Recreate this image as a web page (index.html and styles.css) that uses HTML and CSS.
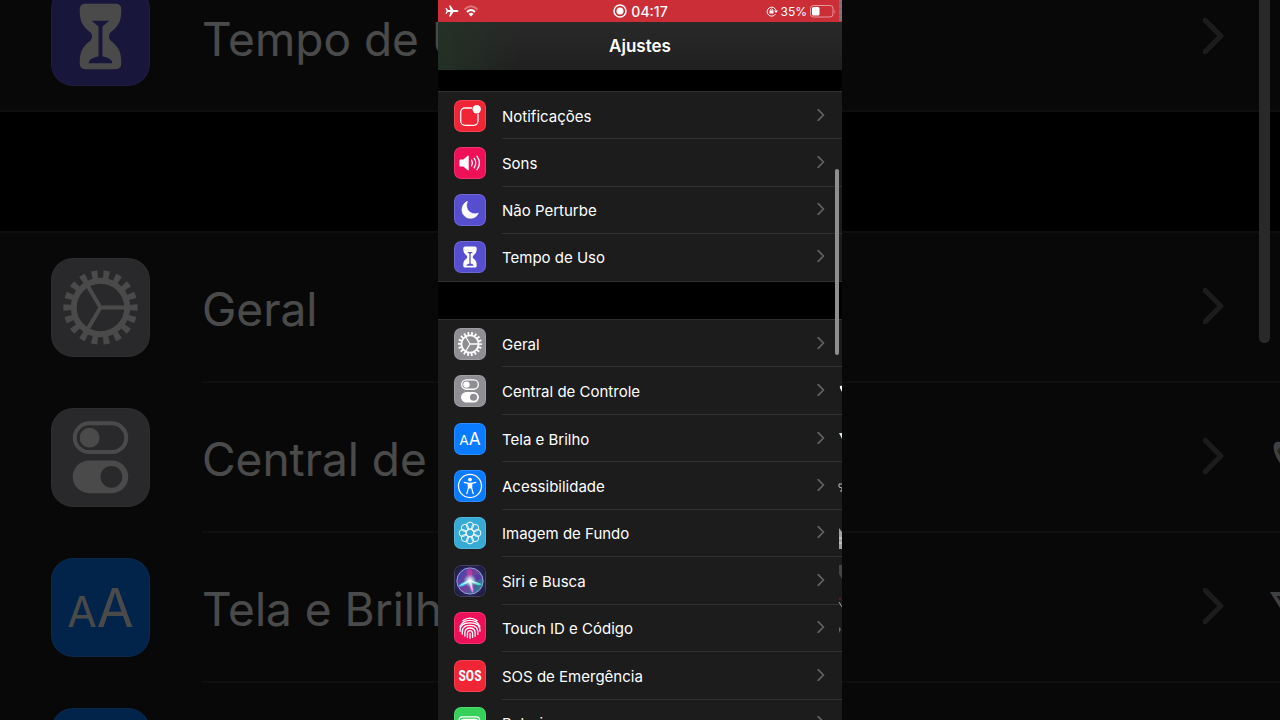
FILE: index.html
```html
<!DOCTYPE html>
<html lang="pt-BR">
<head>
    <meta charset="UTF-8">
    <meta name="viewport" content="width=device-width, initial-scale=1.0">
    <title>Ajustes</title>
    <link rel="stylesheet" href="styles.css">
</head>
<body>
    <!-- Icon set, 100x100 grid -->
    <svg class="sprite" aria-hidden="true">
        <defs>
            <radialGradient id="siri-bg" cx="50%" cy="50%" r="60%">
                <stop offset="0" stop-color="#5b4a9c"/>
                <stop offset="0.6" stop-color="#2b2768"/>
                <stop offset="1" stop-color="#1b1b35"/>
            </radialGradient>
            <radialGradient id="siri-glow">
                <stop offset="0" stop-color="#fff"/>
                <stop offset="0.4" stop-color="#dff" stop-opacity="0.7"/>
                <stop offset="1" stop-color="#9ef" stop-opacity="0"/>
            </radialGradient>
            <linearGradient id="siri-orb" x1="0" y1="0.2" x2="1" y2="0.8">
                <stop offset="0" stop-color="#3b49b0"/>
                <stop offset="0.45" stop-color="#7a3c9c"/>
                <stop offset="1" stop-color="#1d8a94"/>
            </linearGradient>
        </defs>
        <symbol id="i-notif" viewBox="0 0 100 100">
            <path d="M57 25H34a13 13 0 0 0-13 13v28a13 13 0 0 0 13 13h28a13 13 0 0 0 13-13V43" fill="none" stroke="#fff" stroke-width="4"/>
            <circle cx="71" cy="29" r="13" fill="#fff"/>
        </symbol>
        <symbol id="i-sound" viewBox="0 0 100 100">
            <path d="M17 42q0-3 3-3h9l13-11q4-3 4 2v40q0 5-4 2L29 61h-9q-3 0-3-3z" fill="#fff"/>
            <path d="M55 41q5 9 0 18M63 35q10 15 0 30M72 29q15 21 0 42" fill="none" stroke="#fff" stroke-width="4" stroke-linecap="round"/>
        </symbol>
        <symbol id="i-moon" viewBox="0 0 100 100">
            <path d="M42 23C32 47 51 68 76 60C72 70 63 76 52 76C36 76 25 64 25 50C25 37 32 27 42 23z" fill="#fff" stroke="#fff" stroke-width="2" stroke-linejoin="round"/>
        </symbol>
        <symbol id="i-hourglass" viewBox="0 0 100 100">
            <path d="M35 17h30q6 0 6 6c0 14-4 17-11 23q-3 4 0 8c7 6 11 9 11 23q0 6-6 6H35q-6 0-6-6c0-14 4-17 11-23q3-4 0-8C33 40 29 37 29 23q0-6 6-6z" fill="#fff"/>
            <path d="M41 34h18l-7 6v30q10 2 10 7H38q0-5 10-7V40z" class="cut"/>
        </symbol>
        <symbol id="i-gear" viewBox="0 0 100 100">
            <circle cx="50" cy="50" r="27" fill="none" stroke="#fff" stroke-width="6"/>
            <circle cx="50" cy="50" r="33" fill="none" stroke="#fff" stroke-width="9" pathLength="36" stroke-dasharray="1 1" stroke-dashoffset="0.5"/>
            <path d="M50 50h26M50 50L37 28M50 50L37 72" stroke="#fff" stroke-width="4"/>
        </symbol>
        <symbol id="i-control" viewBox="0 0 100 100">
            <rect x="24" y="15.500" width="52" height="29" rx="14.500" fill="none" stroke="#fff" stroke-width="4"/>
            <circle cx="39" cy="30" r="10" fill="#fff"/>
            <rect x="22" y="53" width="56" height="33" rx="16.500" fill="#fff"/>
            <circle cx="61" cy="69.500" r="11" class="cut"/>
        </symbol>
        <symbol id="i-display" viewBox="0 0 100 100">
            <text x="50" y="70" class="icon-text" text-anchor="middle" font-size="43">A<tspan font-size="54">A</tspan></text>
        </symbol>
        <symbol id="i-access" viewBox="0 0 100 100">
            <circle cx="50" cy="50" r="36" fill="none" stroke="#fff" stroke-width="4"/>
            <circle cx="50" cy="30" r="6" fill="#fff"/>
            <path d="M32 39l13 3v14l-5 18M68 39l-13 3v14l5 18" fill="none" stroke="#fff" stroke-width="4" stroke-linecap="round" stroke-linejoin="round"/>
            <path d="M43 40h14l-1 18H44z" fill="#fff"/>
        </symbol>
        <symbol id="i-flower" viewBox="0 0 100 100">
            <g fill="none" stroke="#fff" stroke-width="3">
                <circle cx="50" cy="27" r="11"/><circle cx="66" cy="34" r="11"/>
                <circle cx="73" cy="50" r="11"/><circle cx="66" cy="66" r="11"/>
                <circle cx="50" cy="73" r="11"/><circle cx="34" cy="66" r="11"/>
                <circle cx="27" cy="50" r="11"/><circle cx="34" cy="34" r="11"/>
                <circle cx="50" cy="50" r="12"/>
            </g>
        </symbol>
        <symbol id="i-siri" viewBox="0 0 100 100">
            <rect width="100" height="100" fill="url(#siri-bg)"/>
            <circle cx="50" cy="50" r="41" fill="url(#siri-orb)" stroke="#9aa6d8" stroke-width="3"/>
            <path d="M50 48C42 30 32 20 47 12C63 16 57 32 50 48z" fill="#c43a9e" opacity="0.8"/>
            <path d="M50 48C63 27 77 23 86 39C80 49 65 50 50 48z" fill="#5b38a5"/>
            <path d="M50 48C34 50 20 57 14 66C27 73 40 60 50 48z" fill="#35c4e8"/>
            <path d="M50 48C63 50 78 58 87 59C78 68 60 61 50 48z" fill="#49e0bd"/>
            <path d="M50 48C58 61 64 76 59 87C48 79 47 63 50 48z" fill="#d27bdf"/>
            <path d="M16 66L48 45L84 59L53 53L59 82L47 54z" fill="#fff" opacity="0.8"/>
            <circle cx="50" cy="49" r="21" fill="url(#siri-glow)"/>
        </symbol>
        <symbol id="i-touch" viewBox="0 0 100 100">
            <g fill="none" stroke="#fff" stroke-width="4" stroke-linecap="round">
                <path d="M28 27Q50 11 72 27"/>
                <path d="M19 45Q27 26 50 26Q73 26 81 45"/>
                <path d="M19 60Q17 34 50 34Q83 34 81 60"/>
                <path d="M26 69Q22 42 50 42Q78 42 74 70"/>
                <path d="M34 75V64Q35 50 50 50Q65 50 66 64V76"/>
                <path d="M42 80V65Q43 58 50 58Q57 58 58 66V80M50 67V82"/>
            </g>
        </symbol>
        <symbol id="i-sos" viewBox="0 0 100 100">
            <text x="50" y="66" class="icon-text sos" font-size="43" text-anchor="middle">SOS</text>
        </symbol>
        <symbol id="i-battery" viewBox="0 0 100 100">
            <rect x="16" y="31" width="64" height="38" rx="10" fill="none" stroke="#fff" stroke-width="4"/>
            <rect x="22" y="37" width="52" height="26" rx="5" fill="#fff"/>
            <path d="M85 43q7 7 0 14z" fill="#fff"/>
        </symbol>
        <symbol id="i-chevron" viewBox="0 0 20 34">
            <path d="M2 2l15 15L2 32" fill="none" stroke="currentColor" stroke-width="5" stroke-linecap="round" stroke-linejoin="round"/>
        </symbol>
    </svg>

    <!-- Enlarged, dimmed list behind the phone -->
    <div class="backdrop" aria-hidden="true">
        <ul class="group">
            <li class="row"><span class="icon purple"><svg><use href="#i-hourglass"/></svg></span><span class="label">Tempo de Uso</span><svg class="chevron"><use href="#i-chevron"/></svg></li>
        </ul>
        <ul class="group">
            <li class="row"><span class="icon gray"><svg><use href="#i-gear"/></svg></span><span class="label">Geral</span><svg class="chevron"><use href="#i-chevron"/></svg></li>
            <li class="row"><span class="icon gray"><svg><use href="#i-control"/></svg></span><span class="label">Central de Controle</span><svg class="chevron"><use href="#i-chevron"/></svg></li>
            <li class="row"><span class="icon blue"><svg><use href="#i-display"/></svg></span><span class="label">Tela e Brilho</span><svg class="chevron"><use href="#i-chevron"/></svg></li>
            <li class="row"><span class="icon blue"><svg><use href="#i-access"/></svg></span><span class="label">Acessibilidade</span><svg class="chevron"><use href="#i-chevron"/></svg></li>
        </ul>
        <div class="scrollbar"></div>
        <svg class="edge" viewBox="0 0 12 720">
            <path d="M12 442C3 440 4 452 12 463z" fill="#d5e2ee"/>
            <path d="M12 447l-3 4 3 5z" fill="#a8843c"/>
            <path d="M2 592h10v16z" fill="#d5e2ee"/>
            <path d="M8 596h4v5z" fill="#6b4238"/>
        </svg>
    </div>

    <main class="phone">
        <div class="status">
            <div class="status-left">
                <svg width="14" height="14" viewBox="0 0 28 28"><path d="M27 14q0 2-3 2h-7l-6 9H8l3-9H6l-3 4H1l2-6-2-6h2l3 4h5L8 3h3l6 9h7q3 0 3 2z" fill="#fff"/></svg>
                <svg width="16" height="12" viewBox="0 0 32 24">
                    <path d="M3 9Q16-4 29 9" fill="none" stroke="#fff" stroke-opacity="0.35" stroke-width="4"/>
                    <path d="M8 14Q16 6 24 14" fill="none" stroke="#fff" stroke-width="4"/>
                    <path d="M11 18Q16 13 21 18L16 23z" fill="#fff"/>
                </svg>
            </div>
            <div class="status-time">
                <svg width="14" height="14" viewBox="0 0 28 28"><circle cx="14" cy="14" r="12" fill="none" stroke="#fff" stroke-width="3"/><circle cx="14" cy="14" r="7" fill="#fff"/></svg>
                <span>04:17</span>
            </div>
            <div class="status-right">
                <svg width="12" height="12" viewBox="0 0 24 24">
                    <path d="M19 18A9 9 0 1 1 20 11" fill="none" stroke="#fff" stroke-width="2"/>
                    <path d="M16 11h8l-4 5z" fill="#fff"/>
                    <rect x="7" y="11" width="8" height="6" fill="#fff"/>
                    <path d="M9 11V9q2-3 4 0v2" fill="none" stroke="#fff" stroke-width="2"/>
                </svg>
                <span class="percent">35%</span>
                <svg width="26" height="13" viewBox="0 0 52 26">
                    <rect x="1" y="1" width="45" height="23" rx="6" fill="none" stroke="#fff" stroke-opacity="0.5" stroke-width="2"/>
                    <rect x="4" y="4" width="15" height="17" rx="3" fill="#fff"/>
                    <path d="M49 9q3 4 0 8z" fill="#fff" fill-opacity="0.5"/>
                </svg>
            </div>
        </div>
        <header class="titlebar"><h1>Ajustes</h1></header>

        <nav class="list">
            <ul class="group">
                <li><a class="row" href="#notificacoes"><span class="icon red"><svg><use href="#i-notif"/></svg></span><span class="label">Notificações</span><svg class="chevron"><use href="#i-chevron"/></svg></a></li>
                <li><a class="row" href="#sons"><span class="icon pink"><svg><use href="#i-sound"/></svg></span><span class="label">Sons</span><svg class="chevron"><use href="#i-chevron"/></svg></a></li>
                <li><a class="row" href="#nao-perturbe"><span class="icon purple"><svg><use href="#i-moon"/></svg></span><span class="label">Não Perturbe</span><svg class="chevron"><use href="#i-chevron"/></svg></a></li>
                <li><a class="row" href="#tempo-de-uso"><span class="icon purple"><svg><use href="#i-hourglass"/></svg></span><span class="label">Tempo de Uso</span><svg class="chevron"><use href="#i-chevron"/></svg></a></li>
            </ul>
            <ul class="group group-long">
                <li><a class="row" href="#geral"><span class="icon gray"><svg><use href="#i-gear"/></svg></span><span class="label">Geral</span><svg class="chevron"><use href="#i-chevron"/></svg></a></li>
                <li><a class="row" href="#central"><span class="icon gray"><svg><use href="#i-control"/></svg></span><span class="label">Central de Controle</span><svg class="chevron"><use href="#i-chevron"/></svg></a></li>
                <li><a class="row" href="#tela"><span class="icon blue"><svg><use href="#i-display"/></svg></span><span class="label">Tela e Brilho</span><svg class="chevron"><use href="#i-chevron"/></svg></a></li>
                <li><a class="row" href="#acessibilidade"><span class="icon blue"><svg><use href="#i-access"/></svg></span><span class="label">Acessibilidade</span><svg class="chevron"><use href="#i-chevron"/></svg></a></li>
                <li><a class="row" href="#imagem"><span class="icon cyan"><svg><use href="#i-flower"/></svg></span><span class="label">Imagem de Fundo</span><svg class="chevron"><use href="#i-chevron"/></svg></a></li>
                <li><a class="row" href="#siri"><span class="icon siri"><svg><use href="#i-siri"/></svg></span><span class="label">Siri e Busca</span><svg class="chevron"><use href="#i-chevron"/></svg></a></li>
                <li><a class="row" href="#touch-id"><span class="icon pink"><svg><use href="#i-touch"/></svg></span><span class="label">Touch ID e Código</span><svg class="chevron"><use href="#i-chevron"/></svg></a></li>
                <li><a class="row" href="#sos"><span class="icon red"><svg><use href="#i-sos"/></svg></span><span class="label">SOS de Emergência</span><svg class="chevron"><use href="#i-chevron"/></svg></a></li>
                <li><a class="row" href="#bateria"><span class="icon green"><svg><use href="#i-battery"/></svg></span><span class="label">Bateria</span><svg class="chevron"><use href="#i-chevron"/></svg></a></li>
            </ul>
        </nav>
        <div class="scrollbar"></div>
        <!-- Slivers showing at the right border -->
        <svg class="edge" viewBox="0 0 4 720">
            <path d="M1 0h3v21H1z" fill="#8b7078"/>
            <path d="M1 3h3M1 9h3M1 15h3M1 19h3" stroke="#4d7773" stroke-width="1"/>
            <path d="M4 386q-3-1-2 2l2 4z" fill="#fff"/>
            <path d="M1 433h3v6z" fill="#d5e8f0"/>
            <path d="M4 484H1v3l3 1v3H2" fill="none" stroke="#bbb" stroke-width="1"/>
            <path d="M1 528l3 4v17H1z" fill="#a69da8"/>
            <path d="M1 538h3M1 543h3" stroke="#ddd" stroke-width="1"/>
            <path d="M1 565h3v14l-3-5z" fill="#444"/>
            <path d="M1 599h2" stroke="#7b2828" stroke-width="1"/>
            <path d="M1 602l3 5" stroke="#999" stroke-width="1"/>
            <path d="M1 627l2 2-2 4z" fill="#666"/>
        </svg>
    </main>
</body>
</html>
```

FILE: styles.css
```css
* {
    box-sizing: border-box;
}
body {
    margin: 0;
    height: 100vh;
    overflow: hidden;
    position: relative;
    background: #000;
    color: #fff;
    font-family: Inter, "Liberation Sans", sans-serif;
}
ul {
    list-style: none;
    margin: 0;
    padding: 0;
}
.sprite {
    position: absolute;
    width: 0;
    height: 0;
}

/* Shared list parts */
.group {
    background: #1c1c1c;
    border-top: 1px solid #303032;
    border-bottom: 1px solid #303032;
}
.row {
    display: flex;
    align-items: center;
    height: 100%;
    color: #fff;
    text-decoration: none;
    position: relative;
}
.label {
    flex: 1;
    padding-top: 1px;
    white-space: nowrap;
}
.icon {
    flex: none;
    overflow: hidden;
    position: relative;
}
.icon::after {
    content: "";
    position: absolute;
    inset: 0;
    border: 1px solid rgba(255, 255, 255, 0.15);
    border-radius: inherit;
}
.icon svg {
    display: block;
    width: 100%;
    height: 100%;
}
.chevron {
    flex: none;
    color: #626266;
}
.icon-text {
    fill: #fff;
    font-family: Inter, sans-serif;
}
.sos {
    font-family: "Liberation Sans Narrow", "Roboto Condensed", Roboto, sans-serif;
    font-weight: 700;
}
.cut {
    fill: var(--tile);
}
.red { --tile: #f02535; }
.pink { --tile: #ee1158; }
.purple { --tile: #574dcf; }
.gray { --tile: #8e8e93; }
.blue { --tile: #0a7aff; }
.cyan { --tile: #37aad5; }
.green { --tile: #35d158; }
.siri { --tile: #1b1b35; }
.icon {
    background: var(--tile);
}
.scrollbar {
    position: absolute;
    background: #8e8e8e;
}
.edge {
    position: absolute;
    top: 0;
    right: 0;
    height: 720px;
}

/* Backdrop */
.backdrop {
    position: absolute;
    inset: 0;
    overflow: hidden;
    opacity: 0.29;
    font-size: 46px;
}
.backdrop .group {
    border-width: 2px;
}
.backdrop .group:first-child {
    margin-top: -41px;
    margin-bottom: 119px;
}
.backdrop .row {
    height: 150px;
    padding-left: 51px;
    padding-right: 56px;
}
.backdrop .group:first-child .row {
    height: 149px;
    padding-top: 4px;
}
.backdrop .row:not(:last-child)::after {
    content: "";
    position: absolute;
    left: 202px;
    right: 0;
    bottom: 0;
    height: 2px;
    background: #303032;
}
.backdrop .icon {
    width: 99px;
    height: 99px;
    margin-right: 52px;
    margin-bottom: 2px;
    border-radius: 22px;
}
.backdrop .label {
    padding-top: 2px;
}
.backdrop .chevron {
    width: 21px;
    height: 36px;
    margin-bottom: 4px;
}
.backdrop .scrollbar {
    top: -240px;
    right: 10px;
    width: 11px;
    height: 583px;
    border-radius: 6px;
}
.backdrop .edge {
    width: 12px;
}

/* Phone */
.phone {
    position: relative;
    max-width: 404px;
    height: 100%;
    margin: 0 auto;
    overflow: hidden;
    background: #000;
}
.status {
    display: grid;
    grid-template-columns: 1fr auto 1fr;
    align-items: center;
    height: 22px;
    padding: 0 6px 0 7px;
    background: #cb2e37;
    font-size: 13px;
}
.status-left,
.status-time,
.status-right {
    display: flex;
    align-items: center;
    gap: 4px;
}
.status-time {
    font-size: 14px;
    font-weight: 500;
}
.status-right {
    justify-content: flex-end;
    gap: 3px;
}
.percent {
    font-size: 12px;
}
.titlebar {
    display: flex;
    align-items: center;
    justify-content: center;
    height: 48px;
    background: linear-gradient(90deg, rgba(36, 50, 38, 0.9), rgba(36, 36, 36, 0) 20%), linear-gradient(#292929, #202020);
}
.titlebar h1 {
    margin: 0;
    font-size: 17px;
    font-weight: 600;
}
.list {
    display: grid;
    gap: 37px;
    padding-top: 21px;
    font-size: 15px;
}
.list .group {
    display: grid;
    grid-auto-rows: 1fr;
    height: 191px;
}
.list .group-long {
    height: 429px;
}
.list .row {
    padding: 0 17px 0 16px;
}
.list li:not(:last-child) .row::after {
    content: "";
    position: absolute;
    left: 64px;
    right: 0;
    bottom: 0;
    height: 1px;
    background: #303032;
}
.list .icon {
    width: 32px;
    height: 32px;
    margin-right: 16px;
    border-radius: 7px;
}
.list .chevron {
    width: 8px;
    height: 12px;
    margin-bottom: 2px;
}
.phone .scrollbar {
    top: 169px;
    right: 3px;
    width: 4px;
    height: 186px;
    border-radius: 2px;
}
.phone .edge {
    width: 4px;
}
```
